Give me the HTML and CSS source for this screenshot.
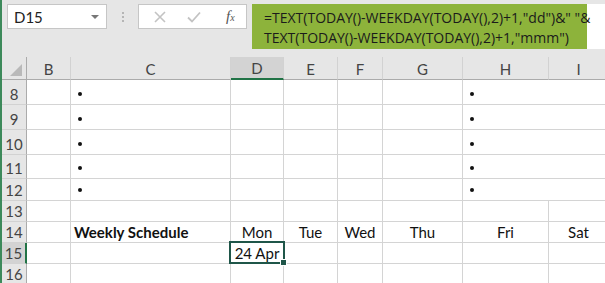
FILE: index.html
```html
<!DOCTYPE html>
<html lang="en">
<head>
  <meta charset="UTF-8">
  <meta name="viewport" content="width=device-width, initial-scale=1.0">
  <title>Weekly Schedule</title>
  <link rel="stylesheet" href="styles.css">
</head>
<body>
  <!-- Barra de fórmulas -->
  <div class="formula-bar">
    <div class="name-box">
      <span>D15</span>
      <span class="caret"></span>
    </div>
    <div class="grip"><i></i><i></i><i></i></div>
    <div class="fx-buttons">
      <svg width="12" height="12" viewBox="0 0 12 12"><path d="M1 1 L11 11 M11 1 L1 11" stroke="#c3c3c3" stroke-width="1.6" fill="none"/></svg>
      <svg width="14" height="12" viewBox="0 0 14 12"><path d="M1 6.5 L5 10.5 L13 1.5" stroke="#c3c3c3" stroke-width="1.8" fill="none"/></svg>
      <span class="fx">f<small>x</small></span>
    </div>
    <div class="formula-input">
      <div class="formula-text">
        <div>=TEXT(TODAY()-WEEKDAY(TODAY(),2)+1,"dd")&amp;" "&amp;</div>
        <div>TEXT(TODAY()-WEEKDAY(TODAY(),2)+1,"mmm")</div>
      </div>
    </div>
  </div>

  <!-- Hoja -->
  <div class="sheet">
    <div class="hd corner"><span class="tri"></span></div>
    <div class="hd">B</div>
    <div class="hd">C</div>
    <div class="hd active-col">D</div>
    <div class="hd">E</div>
    <div class="hd">F</div>
    <div class="hd">G</div>
    <div class="hd">H</div>
    <div class="hd">I</div>

    <div class="rh">8</div>
    <div class="c"></div><div class="c bullet"><b></b></div><div class="c"></div><div class="c"></div><div class="c"></div><div class="c"></div><div class="c bullet span2"><b></b></div>

    <div class="rh">9</div>
    <div class="c"></div><div class="c bullet"><b></b></div><div class="c"></div><div class="c"></div><div class="c"></div><div class="c"></div><div class="c bullet span2"><b></b></div>

    <div class="rh">10</div>
    <div class="c"></div><div class="c bullet"><b></b></div><div class="c"></div><div class="c"></div><div class="c"></div><div class="c"></div><div class="c bullet span2"><b></b></div>

    <div class="rh">11</div>
    <div class="c"></div><div class="c bullet"><b></b></div><div class="c"></div><div class="c"></div><div class="c"></div><div class="c"></div><div class="c bullet span2"><b></b></div>

    <div class="rh">12</div>
    <div class="c"></div><div class="c bullet"><b></b></div><div class="c"></div><div class="c"></div><div class="c"></div><div class="c"></div><div class="c bullet span2"><b></b></div>

    <div class="rh">13</div>
    <div class="c"></div><div class="c"></div><div class="c"></div><div class="c"></div><div class="c"></div><div class="c"></div><div class="c"></div><div class="c"></div>

    <div class="rh">14</div>
    <div class="c"></div><div class="c title">Weekly Schedule</div><div class="c mid">Mon</div><div class="c mid">Tue</div><div class="c mid">Wed</div><div class="c mid">Thu</div><div class="c mid">Fri</div><div class="c mid">Sat</div>

    <div class="rh active-row">15</div>
    <div class="c"></div><div class="c"></div><div class="c mid selected">24 Apr</div><div class="c"></div><div class="c"></div><div class="c"></div><div class="c"></div><div class="c"></div>

    <div class="rh">16</div>
    <div class="c"></div><div class="c"></div><div class="c"></div><div class="c"></div><div class="c"></div><div class="c"></div><div class="c"></div><div class="c"></div>
  </div>
</body>
</html>
```

FILE: styles.css
```css
body {
  margin: 0;
  width: 603px;
  height: 283px;
  overflow: hidden;
  background-color: #e6e6e6;
  border-left: 2px solid #3d8a5b;
  font-family: Lato, "Open Sans", sans-serif;
}

/* Barra de fórmulas */
.formula-bar {
  height: 57px;
  display: flex;
  align-items: flex-start;
  padding-top: 4px;
  box-sizing: border-box;
}
.name-box {
  margin-left: 5px;
  width: 100px;
  height: 25px;
  box-sizing: border-box;
  background-color: #fff;
  border: 1px solid #c6c6c6;
  display: flex;
  align-items: center;
  justify-content: space-between;
  padding: 0 7px 0 6px;
  font-size: 15px;
  color: #222;
}
.caret {
  width: 0;
  height: 0;
  border-left: 4px solid transparent;
  border-right: 4px solid transparent;
  border-top: 4px solid #777;
}
.grip {
  width: 31px;
  height: 25px;
  display: flex;
  flex-direction: column;
  align-items: center;
  justify-content: center;
  gap: 2px;
}
.grip i {
  width: 2px;
  height: 2px;
  background-color: #b5b5b5;
}
.fx-buttons {
  width: 109px;
  height: 25px;
  box-sizing: border-box;
  background-color: #fff;
  border: 1px solid #c6c6c6;
  display: flex;
  align-items: center;
  padding-left: 15px;
  gap: 21px;
}
.fx {
  font-family: "Liberation Serif", serif;
  font-style: italic;
  font-size: 15px;
  color: #555;
  margin-left: 4px;
}
.fx small {
  font-size: 10px;
}
.formula-input {
  margin-left: 5px;
  flex: 1;
  height: 45px;
  background-color: #fff;
}
.formula-text {
  width: 335px;
  height: 45px;
  box-sizing: border-box;
  background-color: #8db33b;
  padding: 4px 0 0 12px;
  font-family: "Open Sans", sans-serif;
  font-size: 14px;
  line-height: 20px;
  color: #1b1b1b;
  white-space: nowrap;
}

/* Hoja */
.sheet {
  display: grid;
  grid-template-columns: 25px 44px 160px 53px 54px 45px 80px 86px 60px;
  grid-template-rows: 23px 25px 25px 25px 24px 22px 21px 21px 21px 21px;
  background-color: #fff;
  font-size: 15px;
}
.hd {
  background-color: #e6e6e6;
  border-right: 1px solid #d2d2d2;
  border-bottom: 1px solid #ababab;
  display: flex;
  align-items: center;
  justify-content: center;
  color: #444;
  font-size: 15px;
  padding-top: 1px;
}
.corner {
  position: relative;
  border-right: 1px solid #ababab;
}
.tri {
  position: absolute;
  right: 4px;
  bottom: 3px;
  width: 0;
  height: 0;
  border-left: 12px solid transparent;
  border-bottom: 12px solid #b9b9b9;
}
.active-col {
  background-color: #d3d3d3;
  border-bottom: 2px solid #217346;
}
.rh {
  background-color: #e6e6e6;
  border-right: 1px solid #ababab;
  border-bottom: 1px solid #d2d2d2;
  display: flex;
  align-items: flex-end;
  justify-content: center;
  padding-bottom: 1px;
  color: #444;
  font-size: 15px;
}
.active-row {
  background-color: #d3d3d3;
  border-right: 2px solid #217346;
}
.c {
  border-right: 1px solid #d4d4d4;
  border-bottom: 1px solid #d4d4d4;
  display: flex;
  align-items: flex-end;
  padding: 0 3px 1px;
  color: #111;
  white-space: nowrap;
  overflow: hidden;
}
.bullet {
  padding-left: 7px;
  padding-bottom: 8px;
}
.bullet b {
  width: 4px;
  height: 4px;
  border-radius: 50%;
  background-color: #111;
}
.span2 {
  grid-column: span 2;
}
.title {
  font-weight: bold;
}
.mid {
  justify-content: center;
}
.selected {
  position: relative;
  overflow: visible;
}
.selected::after {
  content: "";
  position: absolute;
  left: -2px;
  top: -2px;
  right: -2px;
  bottom: -1px;
  border: 2px solid #1f5649;
}
.selected::before {
  content: "";
  position: absolute;
  right: -4px;
  bottom: -3px;
  width: 5px;
  height: 5px;
  background-color: #1f5649;
  border: 1px solid #fff;
  z-index: 1;
}
```
